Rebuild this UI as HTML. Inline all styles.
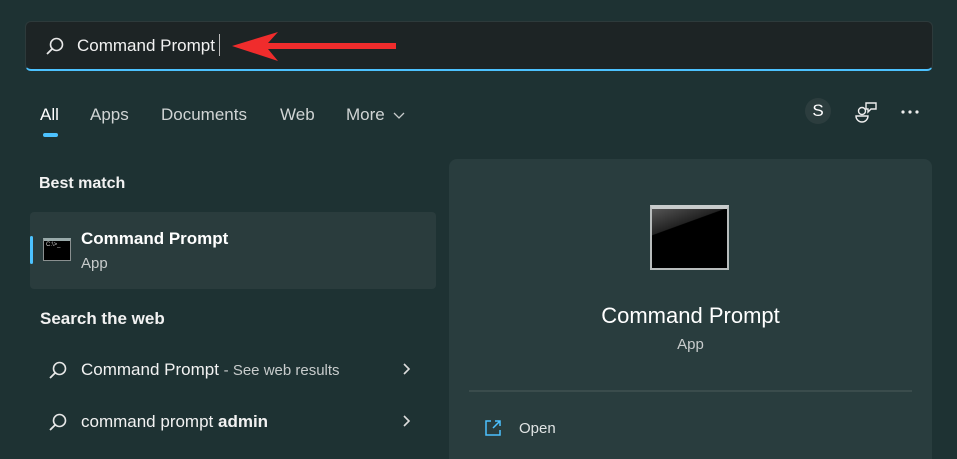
<!DOCTYPE html>
<html><head><meta charset="utf-8"><style>
*{margin:0;padding:0;box-sizing:border-box}
body{width:957px;height:453px;overflow:hidden;background:#1e3233;font-family:"Liberation Sans",sans-serif;color:#fff;position:relative}
.abs{position:absolute}
.search{left:25px;top:21px;width:908px;height:50px;background:#1d2425;border:1px solid #2d3a3b;border-bottom:2px solid #4cc2ff;border-radius:6px}
.t{position:absolute;white-space:nowrap}
</style></head><body>
<div class="abs search"></div>
<svg class="abs" style="left:44px;top:35px" width="22" height="22" viewBox="0 0 22 22"><circle cx="12.5" cy="9.5" r="6" fill="none" stroke="#e8e8e8" stroke-width="1.6"/><line x1="8.3" y1="13.7" x2="3" y2="19" stroke="#e8e8e8" stroke-width="1.8"/></svg>
<div class="t" style="left:77px;top:36px;font-size:17px;color:#f2f2f2">Command Prompt</div>
<div class="abs" style="left:219px;top:34px;width:1px;height:22px;background:#bbb"></div>
<svg class="abs" style="left:228px;top:28px" width="172" height="38" viewBox="0 0 172 38"><polygon points="4,18 50,4 40,15 168,15 168,21 40,21 50,33" fill="#f02c2c"/></svg>
<div class="t" style="left:40px;top:105px;font-size:17px;color:#fff">All</div>
<div class="abs" style="left:43px;top:133px;width:15px;height:4px;border-radius:2px;background:#4cc2ff"></div>
<div class="t" style="left:90px;top:105px;font-size:17px;color:#d0d4d4">Apps</div>
<div class="t" style="left:161px;top:105px;font-size:17px;color:#d0d4d4">Documents</div>
<div class="t" style="left:280px;top:105px;font-size:17px;color:#d0d4d4">Web</div>
<div class="t" style="left:346px;top:105px;font-size:17px;color:#d0d4d4">More</div>
<svg class="abs" style="left:393px;top:111px" width="12" height="9"><polyline points="1,2 6,7 11,2" fill="none" stroke="#c8cccc" stroke-width="1.3"/></svg>
<div class="abs" style="left:805px;top:98px;width:26px;height:26px;border-radius:13px;background:#2c3d3e;text-align:center;line-height:26px;font-size:17px">S</div>
<svg class="abs" style="left:853px;top:101px" width="26" height="24" viewBox="0 0 26 24"><circle cx="9" cy="10" r="3.5" fill="none" stroke="#eee" stroke-width="1.4"/><path d="M3 15h12a6 6 0 0 1-12 0z" fill="none" stroke="#eee" stroke-width="1.4"/><path d="M13 2h10v6h-5l-3 3v-3h-2z" fill="none" stroke="#eee" stroke-width="1.4"/></svg>
<svg class="abs" style="left:900px;top:108px" width="20" height="8"><circle cx="3" cy="4" r="1.6" fill="#eee"/><circle cx="10" cy="4" r="1.6" fill="#eee"/><circle cx="17" cy="4" r="1.6" fill="#eee"/></svg>
<div class="t" style="left:39px;top:175px;font-size:16px;font-weight:bold;color:#f2f2f2">Best match</div>
<div class="abs" style="left:30px;top:212px;width:406px;height:77px;background:#2a3c3d;border-radius:4px"></div>
<div class="abs" style="left:30px;top:236px;width:3px;height:28px;background:#4cc2ff;border-radius:2px"></div>
<div class="abs" style="left:43px;top:238px;width:28px;height:23px;background:#000;border:1px solid #8a9090;border-top:3px solid #9aa"></div>
<div class="t" style="left:46px;top:242px;font-size:6px;color:#ccc">C:\&gt;_</div>
<div class="t" style="left:81px;top:229px;font-size:17px;font-weight:bold;color:#fff">Command Prompt</div>
<div class="t" style="left:81px;top:255px;font-size:15px;color:#c8cccc">App</div>
<div class="t" style="left:40px;top:309px;font-size:17px;font-weight:bold;color:#f2f2f2">Search the web</div>
<svg class="abs" style="left:47px;top:359px" width="22" height="22" viewBox="0 0 22 22"><circle cx="12.5" cy="9.5" r="6" fill="none" stroke="#e8e8e8" stroke-width="1.6"/><line x1="8.3" y1="13.7" x2="3" y2="19" stroke="#e8e8e8" stroke-width="1.8"/></svg>
<div class="t" style="left:81px;top:360px;font-size:17px;color:#f2f2f2">Command Prompt <span style="font-size:15px;color:#c8cccc">- See web results</span></div>
<svg class="abs" style="left:402px;top:362px" width="10" height="14"><polyline points="2,2 7,7 2,12" fill="none" stroke="#ddd" stroke-width="1.6"/></svg>
<svg class="abs" style="left:47px;top:411px" width="22" height="22" viewBox="0 0 22 22"><circle cx="12.5" cy="9.5" r="6" fill="none" stroke="#e8e8e8" stroke-width="1.6"/><line x1="8.3" y1="13.7" x2="3" y2="19" stroke="#e8e8e8" stroke-width="1.8"/></svg>
<div class="t" style="left:81px;top:412px;font-size:17px;color:#f2f2f2">command prompt <b>admin</b></div>
<svg class="abs" style="left:402px;top:414px" width="10" height="14"><polyline points="2,2 7,7 2,12" fill="none" stroke="#ddd" stroke-width="1.6"/></svg>
<div class="abs" style="left:449px;top:159px;width:483px;height:300px;background:#293d3e;border-radius:8px 8px 0 0"></div>
<div class="abs" style="left:650px;top:205px;width:79px;height:65px;border:2px solid #b8bcbc;border-top:4px solid #c8cccc;background:linear-gradient(160deg,#555 0%,#222 30%,#000 31%,#000 100%)"></div>
<div class="t" style="left:0;width:1381px;text-align:center;top:303px;font-size:22px;color:#fff">Command Prompt</div>
<div class="t" style="left:0;width:1381px;text-align:center;top:336px;font-size:15px;color:#c8cccc">App</div>
<div class="abs" style="left:469px;top:390px;width:443px;height:2px;background:#3a4c4c"></div>
<svg class="abs" style="left:484px;top:419px" width="18" height="18" viewBox="0 0 18 18"><path d="M7 2H2v14h14v-5" fill="none" stroke="#4cc2ff" stroke-width="1.5"/><path d="M9 9l7-7M11 2h5v5" fill="none" stroke="#4cc2ff" stroke-width="1.5"/></svg>
<div class="t" style="left:519px;top:420px;font-size:15px;color:#e0e4e4">Open</div>
</body></html>
